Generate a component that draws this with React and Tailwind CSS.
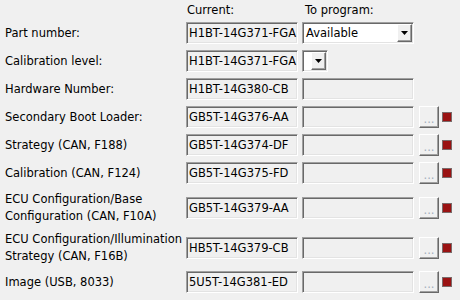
import React from "react";

const rows = [
  { label: "Part number:", current: "H1BT-14G371-FGA", kind: "combo", mt: "mt-0" },
  { label: "Calibration level:", current: "H1BT-14G371-FGA", kind: "smallcombo", mt: "mt-[6px]" },
  { label: "Hardware Number:", current: "H1BT-14G380-CB", kind: "plain", mt: "mt-[6px]" },
  { label: "Secondary Boot Loader:", current: "GB5T-14G376-AA", kind: "file", mt: "mt-[6px]" },
  { label: "Strategy (CAN, F188)", current: "GB5T-14G374-DF", kind: "file", mt: "mt-[6px]" },
  { label: "Calibration (CAN, F124)", current: "GB5T-14G375-FD", kind: "file", mt: "mt-[6px]" },
  { label: ["ECU Configuration/Base", "Configuration (CAN, F10A)"], current: "GB5T-14G379-AA", kind: "file", mt: "mt-[7px]" },
  { label: ["ECU Configuration/Illumination", "Strategy (CAN, F16B)"], current: "HB5T-14G379-CB", kind: "file", mt: "mt-[6px]" },
  { label: "Image (USB, 8033)", current: "5U5T-14G381-ED", kind: "file", mt: "mt-[6px]" },
];

const sunken =
  "border border-t-[#a0a0a0] border-l-[#a0a0a0] border-r-white border-b-white shadow-[inset_1px_1px_0_#696969,inset_-1px_-1px_0_#e3e3e3]";

const raised =
  "border border-t-white border-l-white border-r-[#696969] border-b-[#696969] shadow-[inset_-1px_-1px_0_#a0a0a0]";

const Arrow = () => (
  <svg width="7" height="4" viewBox="0 0 7 4">
    <path d="M0 0h7L3.5 4z" fill="#000" />
  </svg>
);

const ArrowButton = () => (
  <div className={`w-[15px] h-[18px] bg-[#f0f0f0] flex items-center justify-center ${raised}`}>
    <Arrow />
  </div>
);

const Field = ({ text }) => (
  <div className={`w-[112px] h-[22px] bg-[#f0f0f0] flex items-center pl-[2px] ${sunken}`}>
    {text}
  </div>
);

const ProgramCell = ({ kind }) => {
  if (kind === "combo") {
    return (
      <div className={`w-[112px] h-[22px] bg-white flex items-center justify-between pl-[3px] pr-[1px] ${sunken}`}>
        <span>Available</span>
        <ArrowButton />
      </div>
    );
  }
  if (kind === "smallcombo") {
    return (
      <div className={`w-[26px] h-[22px] bg-white flex items-center justify-end pr-[1px] ${sunken}`}>
        <ArrowButton />
      </div>
    );
  }
  return <Field text="" />;
};

export default function App() {
  return (
    <div
      className="w-[460px] h-[300px] bg-[#f0f0f0] text-black text-[11.5px] leading-[16px] overflow-hidden"
      style={{ fontFamily: '"DejaVu Sans", Tahoma, sans-serif' }}
    >
      <div className="flex h-[22px] pt-[2px]">
        <div className="w-[187px]" />
        <div className="w-[118px]">Current:</div>
        <div>To program:</div>
      </div>
      <div className="flex flex-col pl-[5px]">
        {rows.map((r, i) => (
          <div key={i} className={`flex items-center ${r.mt}`}>
            <div className="w-[181px] whitespace-nowrap">
              {Array.isArray(r.label) ? (
                r.label.map((l) => (
                  <div key={l} className="leading-[17px]">
                    {l}
                  </div>
                ))
              ) : (
                r.label
              )}
            </div>
            <Field text={r.current} />
            <div className="ml-[4px] w-[112px]">
              <ProgramCell kind={r.kind} />
            </div>
            {r.kind === "file" && (
              <>
                <div
                  className={`ml-[5px] w-[20px] h-[22px] flex items-end justify-center pb-[3px] text-[#a3aebd] leading-[10px] ${raised}`}
                >
                  ...
                </div>
                <div className="ml-[3px] w-[10px] h-[10px] bg-[#9a1212] border border-[#7a6a6a]" />
              </>
            )}
          </div>
        ))}
      </div>
    </div>
  );
}
